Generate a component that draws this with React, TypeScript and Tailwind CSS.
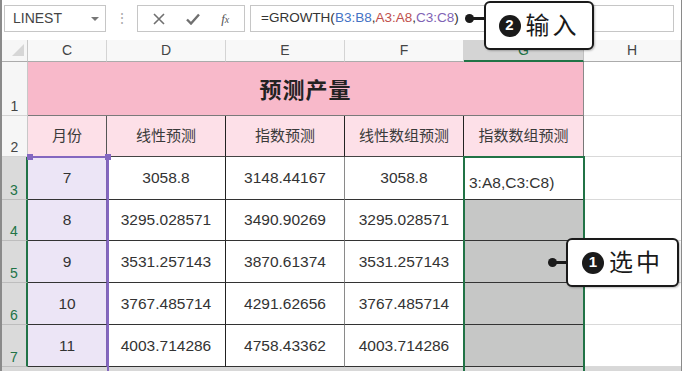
import React from 'react';

const FONT = { fontFamily: '"Liberation Sans","Noto Sans CJK SC",sans-serif' };

const ROWS = [
  ['7', '3058.8', '3148.44167', '3058.8'],
  ['8', '3295.028571', '3490.90269', '3295.028571'],
  ['9', '3531.257143', '3870.61374', '3531.257143'],
  ['10', '3767.485714', '4291.62656', '3767.485714'],
  ['11', '4003.714286', '4758.43362', '4003.714286'],
];

function RowHead({ n, selected }: { n: string; selected?: boolean }) {
  return selected ? (
    <div className="flex items-end justify-center bg-[#dadada] text-[#217346] text-[14px] leading-none pb-[2px] border-r-2 border-r-[#217346] border-b border-b-[#bdbdbd]">
      {n}
    </div>
  ) : (
    <div className="flex items-end justify-center bg-[#f6f6f6] text-[#444] text-[14px] leading-none pb-[2px] border-r border-r-[#c8c8c8] border-b border-b-[#d4d4d4]">
      {n}
    </div>
  );
}

function ColHead({ label }: { label: string }) {
  return (
    <div className="flex items-center justify-center bg-[#f8f8f8] text-[#444] text-[14px] border-r border-r-[#d4d4d4] border-b border-b-[#ababab]">
      {label}
    </div>
  );
}

function Callout({ num, text, className }: { num: string; text: string; className: string }) {
  return (
    <div className={`absolute flex items-center justify-center gap-[5px] rounded-[6px] border-[2.5px] border-[#1a1a1a] bg-white shadow-[1px_1px_2px_rgba(0,0,0,0.25)] ${className}`}>
      <span className="flex h-[22px] w-[22px] items-center justify-center rounded-full bg-[#1a1a1a] text-[15px] font-bold text-white">
        {num}
      </span>
      <span className="text-[24px] leading-none tracking-[3px] text-[#1a1a1a]">{text}</span>
    </div>
  );
}

export default function App() {
  return (
    <div style={FONT} className="relative h-[371px] w-[682px] overflow-hidden border-l-2 border-r border-[#8a8a8a] bg-white">
      {/* formula bar */}
      <div className="flex h-[40px] items-start pt-[5px] pl-[2px]">
        <div className="flex h-[27px] w-[102px] items-center justify-between border border-[#c6c6c6] pl-[8px] pr-[6px] text-[14px] text-[#444]">
          <span>LINEST</span>
          <span className="h-0 w-0 border-x-[4px] border-t-[4px] border-x-transparent border-t-[#777]" />
        </div>
        <div className="flex h-[27px] w-[31px] items-center justify-center text-[14px] text-[#aaa]">⋮</div>
        <div className="flex h-[27px] w-[108px] items-center justify-around border border-[#c6c6c6] px-[4px] text-[#666]">
          <svg width="12" height="12" viewBox="0 0 12 12"><path d="M1 1L11 11M11 1L1 11" stroke="#707070" strokeWidth="1.6" /></svg>
          <svg width="14" height="12" viewBox="0 0 14 12"><path d="M1 6.5L5 10.5L13 1.5" stroke="#707070" strokeWidth="2.4" fill="none" /></svg>
          <span className="text-[13px] italic text-[#555]" style={{ fontFamily: '"Liberation Serif",serif' }}>
            f<span className="text-[10px]">x</span>
          </span>
        </div>
        <div className="ml-[5px] flex h-[27px] w-[424px] items-center border border-[#c6c6c6] pl-[10px] text-[13.5px] text-[#333]">
          <span>=GROWTH(</span>
          <span className="text-[#4472c4]">B3:B8</span>
          <span>,</span>
          <span className="text-[#c0504d]">A3:A8</span>
          <span>,</span>
          <span className="text-[#7f64b5]">C3:C8</span>
          <span>)</span>
        </div>
      </div>

      {/* sheet */}
      <div className="grid grid-cols-[26px_79px_119px_119px_119px_120px_1fr] grid-rows-[22px_54px_41px_43px_41px_42px_42px_42px_4px] text-[#333]">
        {/* column headers */}
        <div className="flex items-end justify-end bg-[#f6f6f6] pr-[3px] pb-[5px] border-r border-r-[#c8c8c8] border-b border-b-[#ababab]">
          <svg width="12" height="12" viewBox="0 0 12 12"><path d="M12 0L12 12L0 12Z" fill="#d6d6d6" /></svg>
        </div>
        <ColHead label="C" />
        <ColHead label="D" />
        <ColHead label="E" />
        <ColHead label="F" />
        <div className="flex items-center justify-center bg-[#d4d4d4] text-[#217346] text-[14px] border-r border-r-[#c0c0c0] border-b-2 border-b-[#217346]">G</div>
        <ColHead label="H" />

        {/* row 1 */}
        <RowHead n="1" />
        <div className="col-span-5 flex items-center justify-center bg-[#f8b9ca] pt-[4px] text-[22px] font-bold tracking-[1px] text-[#222] border-r border-r-[#8a8a8a] border-b border-b-[#7a7a7a]">
          预测产量
        </div>
        <div className="border-b border-b-[#d9d9d9]" />

        {/* row 2 */}
        <RowHead n="2" />
        {['月份', '线性预测', '指数预测', '线性数组预测', '指数数组预测'].map((t, i) => (
          <div
            key={t}
            className={`flex items-center justify-center bg-[#fde0e8] text-[15px] text-[#3a3a3a] border-b border-b-[#444] border-r ${i === 0 ? 'border-r-[#555]' : i === 4 ? 'border-r-[#777]' : 'border-r-[#222]'}`}
          >
            {t}
          </div>
        ))}
        <div className="border-b border-b-[#d9d9d9]" />

        {/* data rows */}
        {ROWS.map((r, ri) => (
          <React.Fragment key={r[0]}>
            <RowHead n={String(ri + 3)} selected />
            <div className="flex items-center justify-center bg-[#ece5f6] text-[15.5px] border-r border-r-[#7f64b5] border-b border-b-[#333]">{r[0]}</div>
            <div className="flex items-center justify-center text-[15.5px] border-r border-r-[#222] border-b border-b-[#333]">{r[1]}</div>
            <div className="flex items-center justify-center text-[15.5px] border-r border-r-[#8a8a8a] border-b border-b-[#333]">{r[2]}</div>
            <div className="flex items-center justify-center text-[15.5px] border-r border-r-[#217346] border-b border-b-[#333]">{r[3]}</div>
            {ri === 0 ? (
              <div className="flex items-end whitespace-nowrap bg-white pl-[5px] pb-[5px] text-[15.5px] border-r border-r-[#217346] border-b border-b-[#333]">
                3:A8,C3:C8)
              </div>
            ) : (
              <div className="bg-[#c6c7c6] border-r border-r-[#217346] border-b border-b-[#333]" />
            )}
            <div className="border-b border-b-[#d9d9d9]" />
          </React.Fragment>
        ))}

        {/* bottom strip */}
        <div className="col-span-7 bg-[#d8d8d8]" />
      </div>

      {/* reference range highlight C3:C8 */}
      <div className="pointer-events-none absolute left-[26px] top-[156px] h-[220px] w-[81px] border-r-2 border-t-2 border-[#8467c0]">
        <span className="absolute -left-[1px] -top-[4px] h-[6px] w-[6px] bg-[#8467c0]" />
        <span className="absolute -right-[4px] -top-[4px] h-[6px] w-[6px] bg-[#8467c0]" />
      </div>

      {/* selected range G3:G7 */}
      <div className="pointer-events-none absolute left-[461px] top-[156px] h-[220px] w-[122px] border-x-2 border-t-2 border-[#217346]" />

      {/* callout 2 */}
      <div className="absolute left-[463px] top-[14px] h-[9px] w-[9px] rounded-full bg-[#1a1a1a]" />
      <div className="absolute left-[468px] top-[17px] h-[3px] w-[16px] bg-[#1a1a1a]" />
      <Callout num="2" text="输入" className="left-[482px] top-[1px] h-[49px] w-[110px]" />

      {/* callout 1 */}
      <div className="absolute left-[546px] top-[258px] h-[9px] w-[9px] rounded-full bg-[#1a1a1a]" />
      <div className="absolute left-[551px] top-[261px] h-[3px] w-[15px] bg-[#1a1a1a]" />
      <Callout num="1" text="选中" className="left-[564px] top-[238px] h-[49px] w-[113px]" />
    </div>
  );
}
